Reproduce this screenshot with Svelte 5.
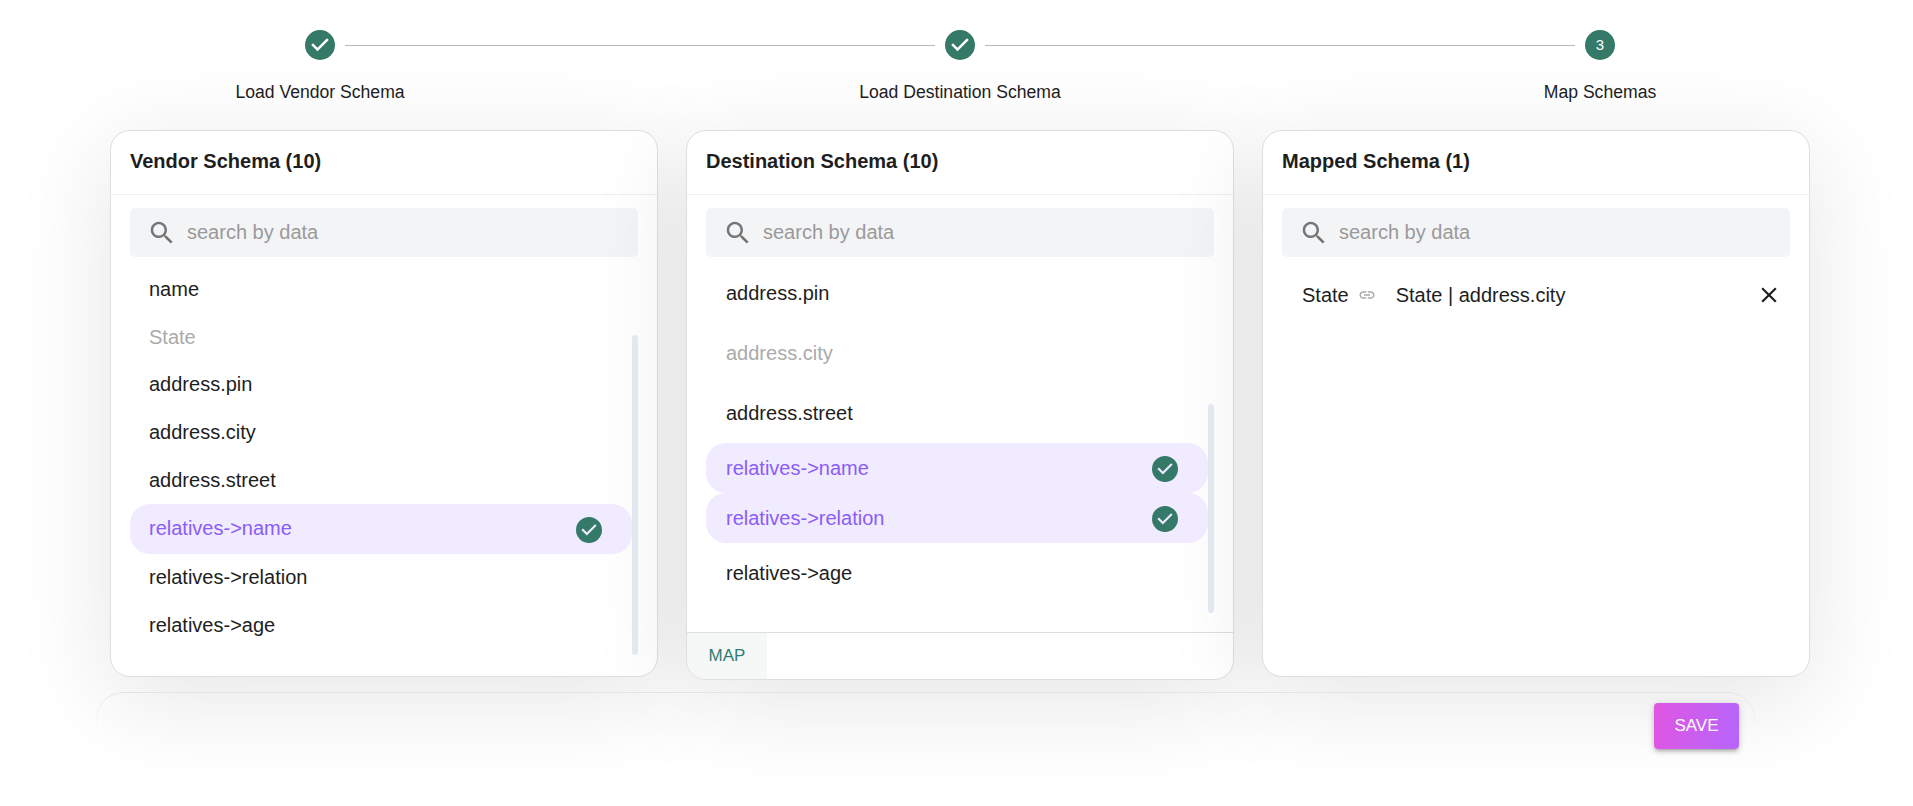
<script>
    const checkPath = "M12 0a12 12 0 1 0 0 24 12 12 0 0 0 0-24zm-2 17l-5-5 1.4-1.4 3.6 3.6 7.6-7.6L19 8l-9 9z";
    const searchPath = "M15.5 14h-.79l-.28-.27C15.41 12.59 16 11.11 16 9.5 16 5.91 13.09 3 9.5 3S3 5.91 3 9.5 5.91 16 9.5 16c1.61 0 3.09-.59 4.23-1.57l.27.28v.79l5 4.99L20.49 19l-4.99-5zm-6 0C7.01 14 5 11.99 5 9.5S7.01 5 9.5 5 14 7.01 14 9.5 11.99 14 9.5 14z";
    const linkPath = "M3.9 12c0-1.71 1.39-3.1 3.1-3.1h4V7H7c-2.76 0-5 2.24-5 5s2.24 5 5 5h4v-1.9H7c-1.71 0-3.1-1.39-3.1-3.1zM8 13h8v-2H8v2zm9-6h-4v1.9h4c1.71 0 3.1 1.39 3.1 3.1s-1.39 3.1-3.1 3.1h-4V17h4c2.76 0 5-2.24 5-5s-2.24-5-5-5z";
    const closePath = "M19 6.41L17.59 5 12 10.59 6.41 5 5 6.41 10.59 12 5 17.59 6.41 19 12 13.41 17.59 19 19 17.59 13.41 12z";

    const steps = ["Load Vendor Schema", "Load Destination Schema", "Map Schemas"];

    const vendor = [
        { name: "name" },
        { name: "State", used: true },
        { name: "address.pin" },
        { name: "address.city" },
        { name: "address.street" },
        { name: "relatives->name", selected: true },
        { name: "relatives->relation" },
        { name: "relatives->age" }
    ];
    const destination = [
        { name: "address.pin" },
        { name: "address.city", used: true },
        { name: "address.street" },
        { name: "relatives->name", selected: true },
        { name: "relatives->relation", selected: true },
        { name: "relatives->age" }
    ];
</script>

{#snippet searchBox()}
    <div class="search">
        <svg class="search-icon" viewBox="0 0 24 24"><path d={searchPath} /></svg>
        <span>search by data</span>
    </div>
{/snippet}

{#snippet row(item)}
    <div class="row" class:used={item.used} class:selected={item.selected}>
        <span>{item.name}</span>
        {#if item.selected}
            <svg class="row-check" viewBox="0 0 24 24"><path d={checkPath} /></svg>
        {/if}
    </div>
{/snippet}

<div class="page">
    <div class="stepper">
        <svg class="step-icon" viewBox="0 0 24 24"><path d={checkPath} /></svg>
        <div class="connector"></div>
        <svg class="step-icon" viewBox="0 0 24 24"><path d={checkPath} /></svg>
        <div class="connector"></div>
        <div class="step-num">3</div>
    </div>
    <div class="labels">
        {#each steps as step}
            <div>{step}</div>
        {/each}
    </div>

    <div class="cards">
        <div class="card">
            <div class="head">Vendor Schema (10)</div>
            {@render searchBox()}
            <div class="list vendor">
                {#each vendor as item}
                    {@render row(item)}
                {/each}
                <div class="thumb"></div>
            </div>
        </div>

        <div class="card tall">
            <div class="head">Destination Schema (10)</div>
            {@render searchBox()}
            <div class="list destination">
                {#each destination as item}
                    {@render row(item)}
                {/each}
                <div class="thumb"></div>
            </div>
            <div class="foot">
                <button class="map">MAP</button>
            </div>
        </div>

        <div class="card">
            <div class="head">Mapped Schema (1)</div>
            {@render searchBox()}
            <div class="mapped">
                <span>State</span>
                <svg class="link-icon" viewBox="0 0 24 24"><path d={linkPath} /></svg>
                <span class="target">State | address.city</span>
                <svg class="close-icon" viewBox="0 0 24 24"><path d={closePath} /></svg>
            </div>
        </div>
    </div>

    <div class="actions">
        <div class="actions-edge"></div>
        <button class="save">SAVE</button>
    </div>
</div>

<style>
    :global(body) {
        background: #fff;
        overflow: hidden;
    }

    .page {
        width: 1913px;
        height: 806px;
        overflow: hidden;
        font-family: "Liberation Sans", Arial, sans-serif;
        color: #1e1e1e;
    }

    .stepper {
        display: flex;
        align-items: center;
        width: 1310px;
        margin-left: 305px;
        padding-top: 30px;
    }
    .step-icon {
        width: 30px;
        height: 30px;
        flex: none;
    }
    .step-icon path {
        fill: #357a68;
    }
    .step-num {
        width: 30px;
        height: 30px;
        flex: none;
        border-radius: 50%;
        background: #357a68;
        color: #fff;
        font-size: 15px;
        line-height: 30px;
        text-align: center;
    }
    .connector {
        flex: 1;
        height: 1px;
        margin: 1px 10px 0;
        background: #b8b8b8;
    }

    .labels {
        display: grid;
        grid-template-columns: repeat(3, 640px);
        margin-top: 20px;
        font-size: 17.6px;
        line-height: 24px;
        text-align: center;
    }

    .cards {
        display: grid;
        grid-template-columns: repeat(3, 548px);
        column-gap: 28px;
        align-items: start;
        margin: 26px 0 0 110px;
    }
    .card {
        height: 547px;
        box-sizing: border-box;
        display: flex;
        flex-direction: column;
        background: #fff;
        border: 1px solid #dedede;
        border-radius: 20px;
        box-shadow: 0 20px 100px rgba(0, 0, 0, 0.105);
        overflow: hidden;
    }
    .card.tall {
        height: 550px;
    }

    .head {
        flex: none;
        height: 64px;
        box-sizing: border-box;
        padding-left: 19px;
        border-bottom: 1px solid #eeeeee;
        font-size: 20px;
        font-weight: 700;
        line-height: 60px;
    }

    .search {
        flex: none;
        display: flex;
        align-items: center;
        height: 49px;
        width: 508px;
        margin: 13px 0 0 19px;
        border-radius: 5px;
        background: #f3f4f6;
        color: #9a9a9a;
        font-size: 20px;
    }
    .search-icon {
        width: 30px;
        height: 30px;
        margin: 0 10px 0 17px;
    }
    .search-icon path {
        fill: #757575;
    }

    .list {
        flex: 1;
        position: relative;
        min-height: 0;
        width: 508px;
        margin-left: 19px;
        font-size: 20px;
    }
    .list.vendor {
        padding-top: 9px;
    }
    .list.destination {
        padding-top: 6px;
    }

    .row {
        display: flex;
        align-items: center;
        justify-content: space-between;
        width: 502px;
        box-sizing: border-box;
        padding: 0 30px 0 19px;
        height: 47.6px;
    }
    .destination .row {
        height: 60px;
        padding-left: 20px;
    }
    .list .row.selected {
        height: 50px;
        background: #f0ebff;
        border-radius: 20px;
        color: #8b5cf6;
    }
    .row.used {
        color: #aaaaaa;
    }
    .row-check {
        width: 26px;
        height: 26px;
        margin-top: 2px;
    }
    .row-check path {
        fill: #357a68;
    }

    .thumb {
        position: absolute;
        right: 0;
        width: 6px;
        border-radius: 3px;
        background: #e2e8f0;
    }
    .vendor .thumb {
        top: 78px;
        height: 320px;
    }
    .destination .thumb {
        top: 147px;
        height: 209px;
    }

    .foot {
        flex: none;
        height: 47px;
        box-sizing: border-box;
        border-top: 1px solid #dedede;
    }
    .map {
        display: block;
        width: 80px;
        height: 46px;
        padding: 0;
        border: none;
        background: #f5f8f7;
        color: #2e7d73;
        font: inherit;
        font-size: 17px;
    }

    .mapped {
        display: flex;
        align-items: center;
        height: 48px;
        margin: 14px 0 0 39px;
        font-size: 20px;
    }
    .link-icon {
        width: 18px;
        height: 18px;
        margin-left: 9px;
    }
    .link-icon path {
        fill: #aaaaaa;
    }
    .target {
        margin-left: 20px;
    }
    .close-icon {
        width: 26px;
        height: 26px;
        margin-left: auto;
        margin-right: 27px;
    }
    .close-icon path {
        fill: #1e1e1e;
    }

    .actions {
        position: relative;
        display: flex;
        justify-content: flex-end;
        width: 1659px;
        box-sizing: border-box;
        height: 90px;
        margin: 12px 0 0 96px;
        padding: 11px 16px 0 0;
    }
    .actions-edge {
        position: absolute;
        inset: 0;
        border: 1px solid #e2e2e2;
        border-radius: 27px;
        -webkit-mask-image: linear-gradient(#000, transparent 36px);
        mask-image: linear-gradient(#000, transparent 36px);
    }
    .save {
        position: relative;
        width: 85px;
        height: 46px;
        padding: 0;
        border: none;
        border-radius: 4px;
        background: linear-gradient(100deg, #e056e2, #b566fb);
        box-shadow: 0 3px 3px -2px rgba(0, 0, 0, 0.2), 0 3px 4px rgba(0, 0, 0, 0.14), 0 1px 8px rgba(0, 0, 0, 0.12);
        color: #fff;
        font: inherit;
        font-size: 17px;
    }
</style>
